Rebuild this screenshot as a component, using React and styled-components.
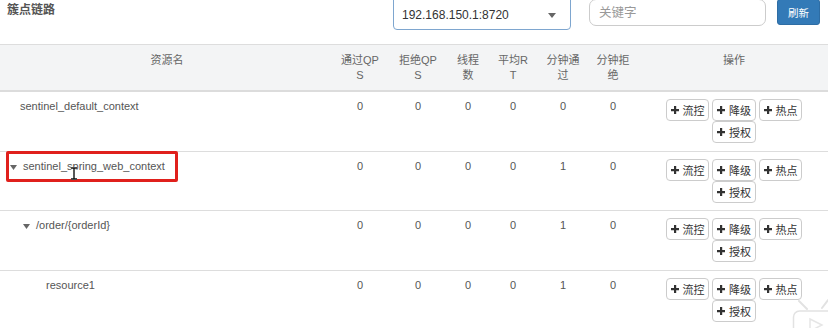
import styled, { createGlobalStyle } from "styled-components";

const GlobalStyle = createGlobalStyle`
  html, body {
    margin: 0;
    padding: 0;
    overflow: hidden;
    background: #fff;
  }
  body {
    font-family: "Liberation Sans", "Noto Sans CJK SC", sans-serif;
    color: #555;
  }
`;

const COLS = "334px 52px 64px 36px 54px 46px 54px 1fr";

const headers = [
  ["资源名"],
  ["通过QP", "S"],
  ["拒绝QP", "S"],
  ["线程", "数"],
  ["平均R", "T"],
  ["分钟通", "过"],
  ["分钟拒", "绝"],
  ["操作"],
];

const rows = [
  { name: "sentinel_default_context", depth: 0, expandable: false, values: [0, 0, 0, 0, 0, 0] },
  { name: "sentinel_spring_web_context", depth: 0, expandable: true, values: [0, 0, 0, 0, 1, 0], marked: true },
  { name: "/order/{orderId}", depth: 1, expandable: true, values: [0, 0, 0, 0, 1, 0] },
  { name: "resource1", depth: 2, expandable: false, values: [0, 0, 0, 0, 1, 0] },
];

const actions = ["流控", "降级", "热点", "授权"];

export default function App() {
  return (
    <Page>
      <GlobalStyle />
      <TopBar>
        <Title>簇点链路</Title>
        <Controls>
          <Select>
            <span>192.168.150.1:8720</span>
            <svg width="8" height="5" viewBox="0 0 8 5">
              <path d="M0 0h8L4 5z" fill="#666" />
            </svg>
          </Select>
          <Search placeholder="关键字" />
          <RefreshButton>刷新</RefreshButton>
        </Controls>
      </TopBar>

      <Table>
        <HeadRow>
          {headers.map((lines, i) => (
            <HeadCell key={i}>
              {lines.map((l, j) => (
                <div key={j}>{l}</div>
              ))}
            </HeadCell>
          ))}
        </HeadRow>

        {rows.map((r) => (
          <Row key={r.name}>
            <NameCell $depth={r.depth}>
              {r.expandable ? (
                <Toggle width="7" height="5" viewBox="0 0 7 5">
                  <path d="M0 0h7L3.5 5z" fill="#666" />
                </Toggle>
              ) : (
                <Spacer />
              )}
              <span>{r.name}</span>
              {r.marked && (
                <>
                  <Marker />
                  <Cursor width="8" height="13" viewBox="0 0 8 13">
                    <path d="M1 1h6M4 1v11M1 12h6" stroke="#fff" strokeWidth="3" fill="none" />
                    <path d="M1 1h6M4 1v11M1 12h6" stroke="#111" strokeWidth="1.4" fill="none" />
                  </Cursor>
                </>
              )}
            </NameCell>
            {r.values.map((v, i) => (
              <Cell key={i}>{v}</Cell>
            ))}
            <OpsCell>
              <ButtonGroup>
                {actions.map((a) => (
                  <ActionButton key={a}>
                    <svg width="8" height="8" viewBox="0 0 8 8">
                      <path d="M3 0h2.2v3H8v2.2H5.2V8H3V5.2H0V3h3z" fill="#333" />
                    </svg>
                    {a}
                  </ActionButton>
                ))}
              </ButtonGroup>
            </OpsCell>
          </Row>
        ))}
      </Table>

      <Watermark width="36" height="30" viewBox="0 0 36 30">
        <path d="M7 3l8 8M36 2l-6 8" stroke="#e2e2e2" strokeWidth="2" strokeLinecap="round" fill="none" />
        <rect x="1.5" y="13" width="42" height="26" rx="6" fill="#fff" stroke="#e2e2e2" strokeWidth="1.5" />
        <path d="M18 21l12 6l-12 6z" fill="none" stroke="#e6e6e6" strokeWidth="1.5" />
      </Watermark>
    </Page>
  );
}

const Page = styled.div`
  position: relative;
  width: 828px;
  height: 328px;
  overflow: hidden;
`;

const TopBar = styled.div`
  display: flex;
  align-items: flex-start;
  justify-content: space-between;
  height: 44px;
  padding: 0 8px 0 7px;
  box-sizing: border-box;
`;

const Title = styled.h3`
  margin: 2px 0 0;
  font-size: 12px;
  line-height: 16px;
  font-weight: bold;
  color: #555;
`;

const Controls = styled.div`
  display: flex;
  align-items: flex-start;
`;

const Select = styled.div`
  width: 178px;
  height: 34px;
  margin-top: -4px;
  box-sizing: border-box;
  border: 1px solid #7ea6cf;
  border-radius: 4px;
  display: flex;
  align-items: center;
  justify-content: space-between;
  padding: 4px 14px 0 8px;
  font-size: 12px;
  color: #333;
`;

const Search = styled.input`
  width: 177px;
  height: 27px;
  margin: -1px 0 0 18px;
  box-sizing: border-box;
  border: 1px solid #ccc;
  border-radius: 7px;
  padding: 0 9px;
  font-family: inherit;
  font-size: 12.5px;
  outline: none;

  &::placeholder {
    color: #999;
  }
`;

const RefreshButton = styled.button`
  width: 43px;
  height: 26px;
  margin: -1px 0 0 11px;
  padding: 0;
  box-sizing: border-box;
  background: #337ab7;
  border: 1px solid #2e6da4;
  border-radius: 3px;
  color: #fff;
  font-family: inherit;
  font-size: 10.5px;
`;

const Table = styled.div`
  border-top: 1px solid #ddd;
`;

const HeadRow = styled.div`
  display: grid;
  grid-template-columns: ${COLS};
  background: #f3f4f5;
  border-bottom: 2px solid #dcdcdc;
`;

const HeadCell = styled.div`
  padding: 8px 0 7px;
  text-align: center;
  font-size: 11px;
  line-height: 15px;
  color: #666;
`;

const Row = styled.div`
  display: grid;
  grid-template-columns: ${COLS};
  border-bottom: 1px solid #ddd;
`;

const Cell = styled.div`
  padding: 7px 0;
  text-align: center;
  font-size: 11px;
  line-height: 15px;
  color: #555;
`;

const NameCell = styled(Cell)`
  position: relative;
  display: flex;
  align-items: flex-start;
  text-align: left;
  padding-left: ${(p) => 10 + 13 * p.$depth}px;
`;

const Toggle = styled.svg`
  flex: none;
  margin: 6px 6px 0 0;
`;

const Spacer = styled.span`
  flex: none;
  width: 10px;
`;

const Marker = styled.div`
  position: absolute;
  left: 6px;
  top: -1px;
  width: 172px;
  height: 31px;
  box-sizing: border-box;
  border: 3px solid #e0201c;
  border-radius: 2px;
`;

const Cursor = styled.svg`
  position: absolute;
  left: 70px;
  top: 15px;
`;

const OpsCell = styled.div`
  padding: 7px 0 7.5px;
`;

const ButtonGroup = styled.div`
  display: flex;
  flex-wrap: wrap;
  justify-content: center;
  column-gap: 3px;
  width: 140px;
  margin: 0 auto;
`;

const ActionButton = styled.button`
  display: flex;
  align-items: center;
  justify-content: center;
  gap: 4px;
  width: 43.5px;
  height: 22px;
  padding: 0;
  box-sizing: border-box;
  background: #fff;
  border: 1px solid #ccc;
  border-radius: 4px;
  color: #333;
  font-family: inherit;
  font-size: 11px;
`;

const Watermark = styled.svg`
  position: absolute;
  right: 0;
  bottom: 0;
`;
